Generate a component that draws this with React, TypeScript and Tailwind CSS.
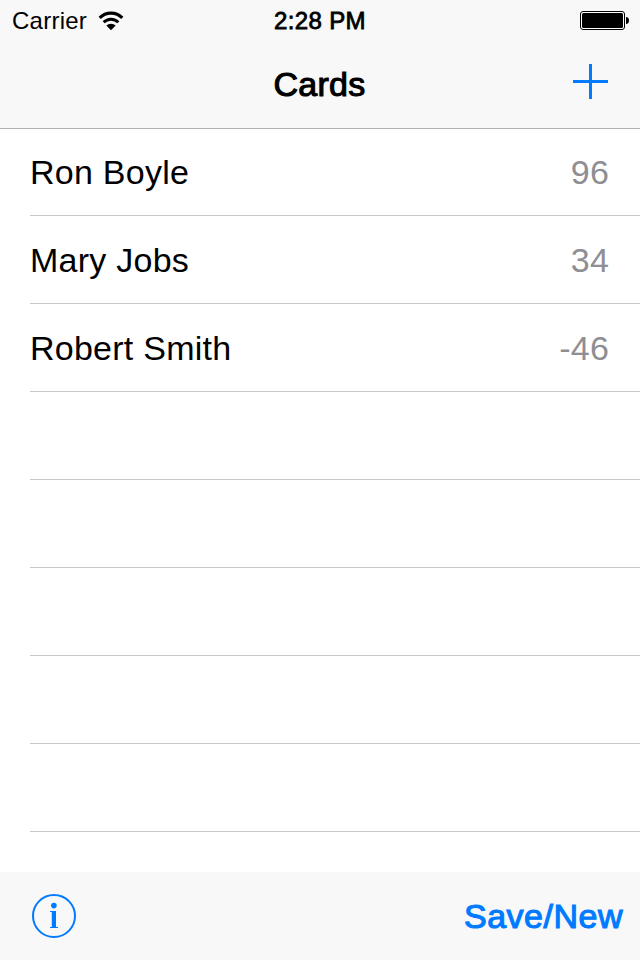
import React from "react";

const TINT = "#007aff";

const CARDS = [
  { name: "Ron Boyle", score: 96 },
  { name: "Mary Jobs", score: 34 },
  { name: "Robert Smith", score: -46 },
];

const EMPTY_ROWS = 5;

function WifiIcon() {
  return (
    <svg width="26" height="20" viewBox="0 0 26 20" aria-hidden="true">
      <path d="M1.7 6.9a15.8 15.8 0 0 1 22.6 0" fill="none" stroke="#000" strokeWidth="3.1" />
      <path d="M5.7 11.3a10.2 10.2 0 0 1 14.6 0" fill="none" stroke="#000" strokeWidth="2.9" />
      <path d="M13 19.2 8.3 14.6a6.6 6.6 0 0 1 9.4 0z" />
    </svg>
  );
}

function BatteryIcon() {
  return (
    <svg width="50" height="20" viewBox="0 0 50 20" aria-hidden="true">
      <rect x="0.5" y="0.5" width="44" height="18" rx="2.5" fill="#fff" stroke="#000" />
      <rect x="2" y="2" width="41" height="15" rx="1.5" />
      <path d="M46 6c2 .2 3 1.3 3 3.5s-1 3.3-3 3.5z" />
    </svg>
  );
}

function StatusBar() {
  return (
    <div className="grid h-10 grid-cols-3 items-center pl-3 pr-[10px] pt-0.5">
      <div className="flex items-center">
        <span className="text-[24px] leading-[38px] tracking-[0.25px]">Carrier</span>
        <span className="ml-[10.5px]">
          <WifiIcon />
        </span>
      </div>
      <div className="-ml-0.5 text-center text-[24px] leading-[38px] tracking-[0.35px] [-webkit-text-stroke:0.8px_#000]">
        2:28 PM
      </div>
      <div className="flex justify-end">
        <BatteryIcon />
      </div>
    </div>
  );
}

function NavBar() {
  return (
    <div className="grid h-[88px] grid-cols-3 items-center">
      <span />
      <h1 className="-ml-px text-center text-[34px] leading-[88px] tracking-[0.3px] [-webkit-text-stroke:1.1px_#000]">
        Cards
      </h1>
      <button type="button" aria-label="Add card" className="mr-8 -mt-[5px] justify-self-end">
        <svg width="35" height="35" viewBox="0 0 35 35" className="block" fill={TINT}>
          <path d="M16 0h3v16h16v3H19v16h-3V19H0v-3h16z" />
        </svg>
      </button>
    </div>
  );
}

function Row({ children }: { children?: React.ReactNode }) {
  return (
    <li className="ml-[30px] flex h-[88px] shrink-0 items-center justify-between border-b border-[#c8c7cc] pr-[31px] pt-0.5 text-[34px]">
      {children}
    </li>
  );
}

function InfoIcon() {
  return (
    <svg width="44" height="44" viewBox="0 0 44 44" className="block" fill={TINT}>
      <circle cx="22" cy="22" r="21" fill="none" stroke={TINT} strokeWidth="2" />
      <circle cx="21.9" cy="11.6" r="2.8" />
      <path d="M18 17h6v16h2v1h-8v-1h1.8V18H18z" />
    </svg>
  );
}

export default function App() {
  return (
    <div className="flex h-[960px] w-[640px] flex-col overflow-hidden bg-white font-['Liberation_Sans',Arial,sans-serif] text-black">
      <header className="z-10 h-[129px] shrink-0 border-b border-[#b2b2b2] bg-[#f8f8f8]">
        <StatusBar />
        <NavBar />
      </header>

      <ul className="-mt-px flex min-h-0 flex-1 flex-col overflow-hidden">
        {CARDS.map((card) => (
          <Row key={card.name}>
            <span className="tracking-[0.25px]">{card.name}</span>
            <span className="tracking-[0.2px] text-[#8e8e93]">{card.score}</span>
          </Row>
        ))}
        {Array.from({ length: EMPTY_ROWS }, (_, i) => (
          <Row key={i} />
        ))}
      </ul>

      <footer className="flex h-[88px] shrink-0 items-center justify-between bg-[#f8f8f8] pl-8 pr-[17px]">
        <button type="button" aria-label="Info">
          <InfoIcon />
        </button>
        <button
          type="button"
          className="text-[34px] tracking-[0.5px] text-[#007aff] [-webkit-text-stroke:1.1px_#007aff]"
        >
          Save/New
        </button>
      </footer>
    </div>
  );
}
